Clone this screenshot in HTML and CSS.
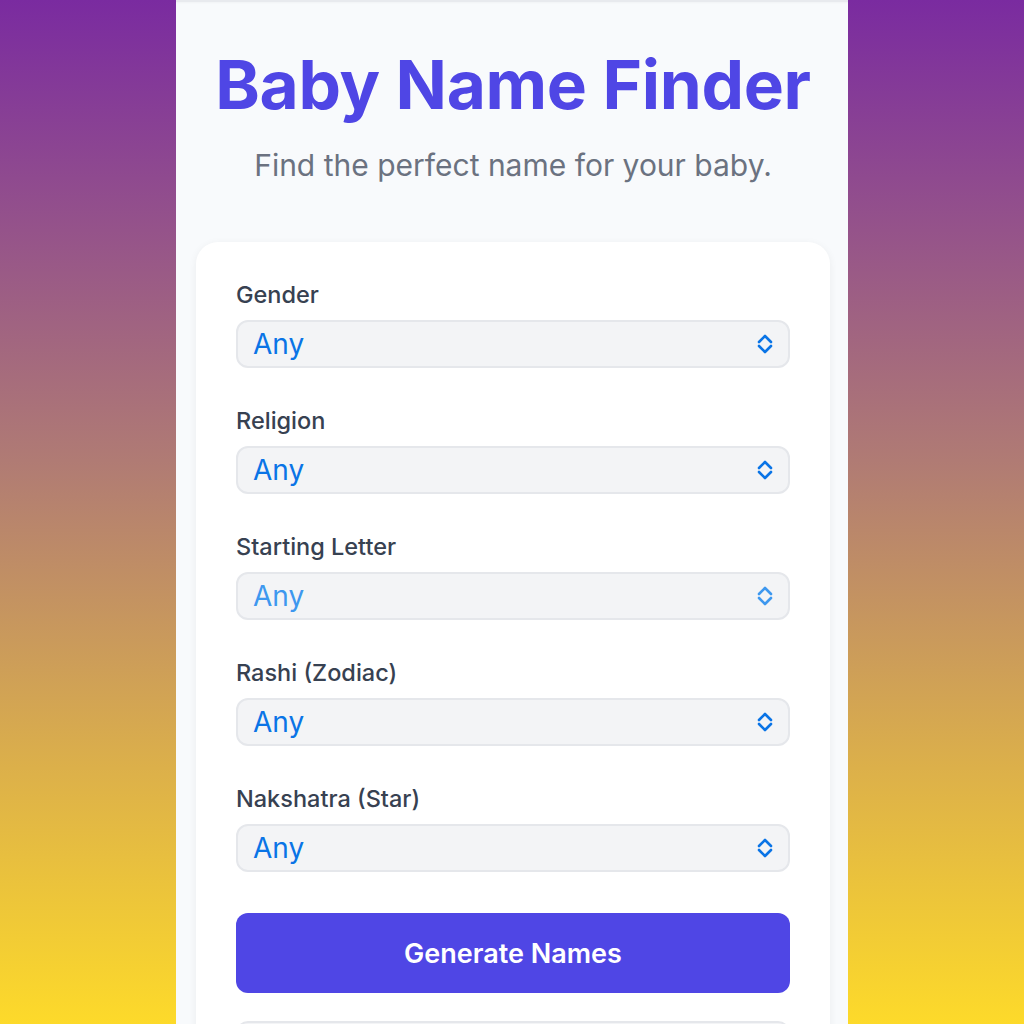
FILE: index.html
```html
<!DOCTYPE html>
<html lang="en">
<head>
<meta charset="utf-8">
<title>Baby Name Finder</title>
<link rel="stylesheet" href="styles.css">
</head>
<body>
<div class="page">
  <main class="column">
    <div class="topbar"></div>
    <header class="hero">
      <h1 class="title">Baby Name Finder</h1>
      <p class="subtitle">Find the perfect name for your baby.</p>
    </header>
    <section class="card">
      <div class="field">
        <label class="label">Gender</label>
        <div class="select"><span class="value">Any</span>
          <svg class="chev" viewBox="0 0 20 22" width="20" height="22"><path d="M4 9 L10 3 L16 9 M4 13 L10 19 L16 13" fill="none" stroke="currentColor" stroke-width="2.6" stroke-linecap="round" stroke-linejoin="round"/></svg>
        </div>
      </div>
      <div class="field">
        <label class="label">Religion</label>
        <div class="select"><span class="value">Any</span>
          <svg class="chev" viewBox="0 0 20 22" width="20" height="22"><path d="M4 9 L10 3 L16 9 M4 13 L10 19 L16 13" fill="none" stroke="currentColor" stroke-width="2.6" stroke-linecap="round" stroke-linejoin="round"/></svg>
        </div>
      </div>
      <div class="field">
        <label class="label">Starting Letter</label>
        <div class="select light"><span class="value">Any</span>
          <svg class="chev" viewBox="0 0 20 22" width="20" height="22"><path d="M4 9 L10 3 L16 9 M4 13 L10 19 L16 13" fill="none" stroke="currentColor" stroke-width="2.6" stroke-linecap="round" stroke-linejoin="round"/></svg>
        </div>
      </div>
      <div class="field">
        <label class="label">Rashi (Zodiac)</label>
        <div class="select"><span class="value">Any</span>
          <svg class="chev" viewBox="0 0 20 22" width="20" height="22"><path d="M4 9 L10 3 L16 9 M4 13 L10 19 L16 13" fill="none" stroke="currentColor" stroke-width="2.6" stroke-linecap="round" stroke-linejoin="round"/></svg>
        </div>
      </div>
      <div class="field">
        <label class="label">Nakshatra (Star)</label>
        <div class="select"><span class="value">Any</span>
          <svg class="chev" viewBox="0 0 20 22" width="20" height="22"><path d="M4 9 L10 3 L16 9 M4 13 L10 19 L16 13" fill="none" stroke="currentColor" stroke-width="2.6" stroke-linecap="round" stroke-linejoin="round"/></svg>
        </div>
      </div>
      <button class="btn">Generate Names</button>
      <div class="next-box"></div>
    </section>
  </main>
</div>
</body>
</html>
```

FILE: styles.css
```css
* { box-sizing: border-box; }
html, body {
  margin: 0;
  height: 1024px;
  overflow: hidden;
}
body {
  background: linear-gradient(180deg, #7a2ba0 0%, #b07b74 45%, #dcb04a 75%, #fdda2a 100%);
  font-family: Inter, "Noto Sans", sans-serif;
}
.page {
  display: flex;
  justify-content: center;
  height: 1024px;
}
.column {
  width: 672px;
  background: #f8fafc;
  padding: 0 18px 0 20px;
  display: flex;
  flex-direction: column;
}
.topbar {
  height: 9px;
  margin: 0 -18px 0 -20px;
  border-bottom: 2px solid #e8eaee;
  box-shadow: 0 1px 2px rgba(0,0,0,0.03);
}
.hero {
  text-align: center;
  padding-top: 43px;
}
.title {
  margin: 0;
  font-size: 67.5px;
  line-height: 80px;
  font-weight: 700;
  color: #4f46e5;
  letter-spacing: -0.3px;
}
.subtitle {
  margin: 22px 0 0;
  font-size: 30px;
  line-height: 36px;
  color: #6b7280;
  font-weight: 400;
}
.card {
  margin-top: 59px;
  background: #ffffff;
  border-radius: 22px;
  padding: 38px 40px 40px;
  box-shadow: 0 2px 8px rgba(15, 23, 42, 0.06);
  display: flex;
  flex-direction: column;
}
.field {
  display: flex;
  flex-direction: column;
  margin-bottom: 38px;
}
.label {
  font-size: 23.5px;
  line-height: 30px;
  font-weight: 500;
  color: #374151;
  margin-bottom: 10px;
}
.select {
  height: 48px;
  background: #f3f4f6;
  border: 2px solid #e5e7eb;
  border-radius: 12px;
  display: flex;
  align-items: center;
  justify-content: space-between;
  padding: 0 13px 0 15px;
  color: #0a74e6;
}
.select.light { color: #3e98ef; }
.value {
  font-size: 28px;
  line-height: 34px;
  font-weight: 400;
}
.chev { display: block; }
.btn {
  margin-top: 3px;
  height: 80px;
  border: none;
  border-radius: 12px;
  background: #4f46e5;
  color: #ffffff;
  font-family: Inter, "Noto Sans", sans-serif;
  font-size: 27px;
  font-weight: 600;
}
.next-box {
  margin-top: 28px;
  height: 48px;
  background: #f3f4f6;
  border: 2px solid #e5e7eb;
  border-radius: 12px;
}
```
